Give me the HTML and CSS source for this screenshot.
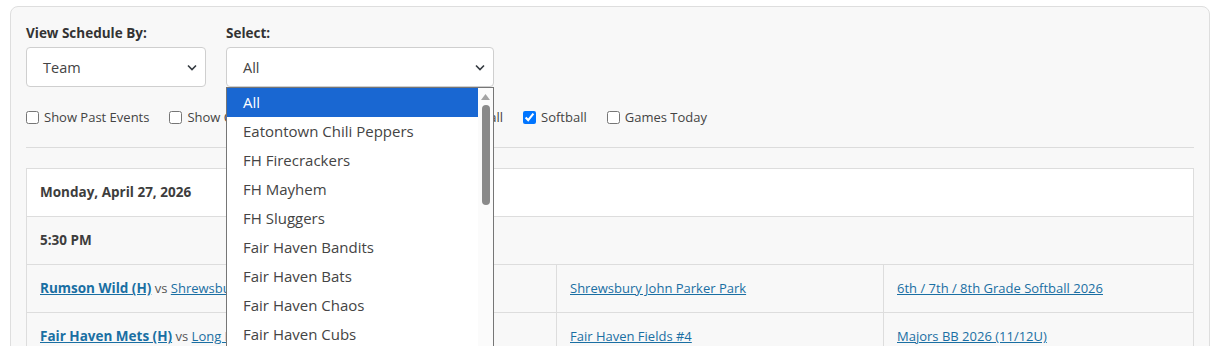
FILE: index.html
```html
<!DOCTYPE html>
<html lang="en">
<head>
    <meta charset="UTF-8">
    <meta name="viewport" content="width=device-width, initial-scale=1.0">
    <title>Schedule</title>
    <link rel="stylesheet" href="styles.css">
</head>
<body>
    <div class="schedule-card">

        <!-- filters -->
        <div class="filter-row">
            <div class="filter">
                <label class="filter-label">View Schedule By:</label>
                <div class="fake-select view-by">
                    <span>Team</span>
                    <svg class="chevron" width="10" height="7" viewBox="0 0 10 7"><path d="M1 1.5 L5 5.5 L9 1.5" fill="none" stroke="#343a40" stroke-width="1.6"/></svg>
                </div>
            </div>
            <div class="filter">
                <label class="filter-label">Select:</label>
                <div class="select-wrap">
                    <div class="fake-select team-select">
                        <span>All</span>
                        <svg class="chevron" width="10" height="7" viewBox="0 0 10 7"><path d="M1 1.5 L5 5.5 L9 1.5" fill="none" stroke="#343a40" stroke-width="1.6"/></svg>
                    </div>

                    <!-- open dropdown list -->
                    <div class="dropdown">
                        <ul class="options">
                            <li class="active">All</li>
                            <li>Eatontown Chili Peppers</li>
                            <li>FH Firecrackers</li>
                            <li>FH Mayhem</li>
                            <li>FH Sluggers</li>
                            <li>Fair Haven Bandits</li>
                            <li>Fair Haven Bats</li>
                            <li>Fair Haven Chaos</li>
                            <li>Fair Haven Cubs</li>
                        </ul>
                        <div class="scrollbar">
                            <svg class="arrow-up" width="9" height="6" viewBox="0 0 9 6"><path d="M4.5 0 L9 6 L0 6 Z" fill="#a3a3a3"/></svg>
                            <div class="thumb"></div>
                        </div>
                    </div>
                </div>
            </div>
        </div>

        <div class="check-row">
            <label class="check"><input type="checkbox"> Show Past Events</label>
            <label class="check"><input type="checkbox"> Show Cancelled Games</label>
            <label class="check"><input type="checkbox"> Practice</label>
            <label class="check"><input type="checkbox"> Baseball</label>
            <label class="check"><input type="checkbox" checked> Softball</label>
            <label class="check"><input type="checkbox"> Games Today</label>
        </div>

        <hr class="divider">

        <!-- schedule table -->
        <table class="schedule">
            <colgroup>
                <col class="col-game">
                <col class="col-field">
                <col class="col-league">
            </colgroup>
            <tr class="date-row"><td colspan="3">Monday, April 27, 2026</td></tr>
            <tr class="time-row"><td colspan="3">5:30 PM</td></tr>
            <tr>
                <td><a href="#" class="team home">Rumson Wild (H)</a> <span class="vs">vs</span> <a href="#" class="team">Shrewsbury Stars</a></td>
                <td><a href="#">Shrewsbury John Parker Park</a></td>
                <td><a href="#">6th / 7th / 8th Grade Softball 2026</a></td>
            </tr>
            <tr>
                <td><a href="#" class="team home">Fair Haven Mets (H)</a> <span class="vs">vs</span> <a href="#" class="team">Long Branch Cubs</a></td>
                <td><a href="#">Fair Haven Fields #4</a></td>
                <td><a href="#">Majors BB 2026 (11/12U)</a></td>
            </tr>
        </table>
    </div>
</body>
</html>
```

FILE: styles.css
```css
/* base */
body {
    margin: 0;
    padding: 6px 8px 0 10px;
    background: #fff;
    font-family: "Open Sans", "Noto Sans", sans-serif;
    font-size: 13px;
    color: #444;
}

.schedule-card {
    width: 1168px;
    background: #f8f8f8;
    border: 1px solid #dedede;
    border-radius: 8px;
    padding: 16px 15px 40px;
}

/* filters */
.filter-row {
    display: flex;
    gap: 20px;
}

.filter-label {
    display: block;
    font-weight: 700;
    font-size: 13.5px;
    color: #333;
    line-height: 20px;
    margin-bottom: 4px;
}

.fake-select {
    box-sizing: border-box;
    height: 40px;
    background: #fff;
    border: 1px solid #cfcfcf;
    border-radius: 4px;
    display: flex;
    align-items: center;
    justify-content: space-between;
    padding: 0 8px 0 16px;
    font-size: 14.5px;
    color: #444;
}

.view-by {
    width: 180px;
}

.team-select {
    width: 268px;
}

.select-wrap {
    position: relative;
}

/* open dropdown list */
.dropdown {
    position: absolute;
    top: 40px;
    left: 0;
    width: 268px;
    height: 262px;
    box-sizing: border-box;
    background: #fff;
    border: 1px solid #767676;
    border-bottom: none;
    display: flex;
    overflow: hidden;
    z-index: 5;
}

.options {
    list-style: none;
    margin: 0;
    padding: 0;
    flex: 1;
}

.options li {
    height: 29px;
    line-height: 29px;
    padding-left: 16px;
    font-size: 15px;
    color: #444;
}

.options li.active {
    background: #1967d2;
    color: #fff;
}

.scrollbar {
    width: 15px;
    background: #fbfbfb;
    display: flex;
    flex-direction: column;
    align-items: center;
}

.arrow-up {
    margin-top: 6px;
}

.thumb {
    width: 8px;
    height: 100px;
    margin-top: 5px;
    border-radius: 4px;
    background: #8a8a8a;
}

/* checkboxes */
.check-row {
    display: flex;
    gap: 20px;
    margin-top: 20px;
}

.check {
    display: flex;
    align-items: center;
    gap: 5px;
    line-height: 20px;
}

.check input {
    margin: 0;
    width: 13px;
    height: 13px;
}

.divider {
    border: none;
    border-top: 1px solid #dcdcdc;
    margin: 20px 0 20px;
}

/* table */
.schedule {
    width: 100%;
    border-collapse: collapse;
    border: 1px solid #dddddd;
}

.col-game { width: 530px; }
.col-field { width: 327px; }

.schedule td {
    padding: 14px 13px;
    line-height: 19px;
    border-top: 1px solid #dddddd;
    border-left: 1px solid #dddddd;
}

.date-row td,
.time-row td {
    font-weight: 700;
    font-size: 13.5px;
    color: #3d3d3d;
}

.date-row td {
    background: #fff;
}

.schedule a {
    color: #1a6fa3;
}

.schedule a.home {
    font-weight: 700;
    font-size: 13.5px;
}

.vs {
    color: #555;
}
```
